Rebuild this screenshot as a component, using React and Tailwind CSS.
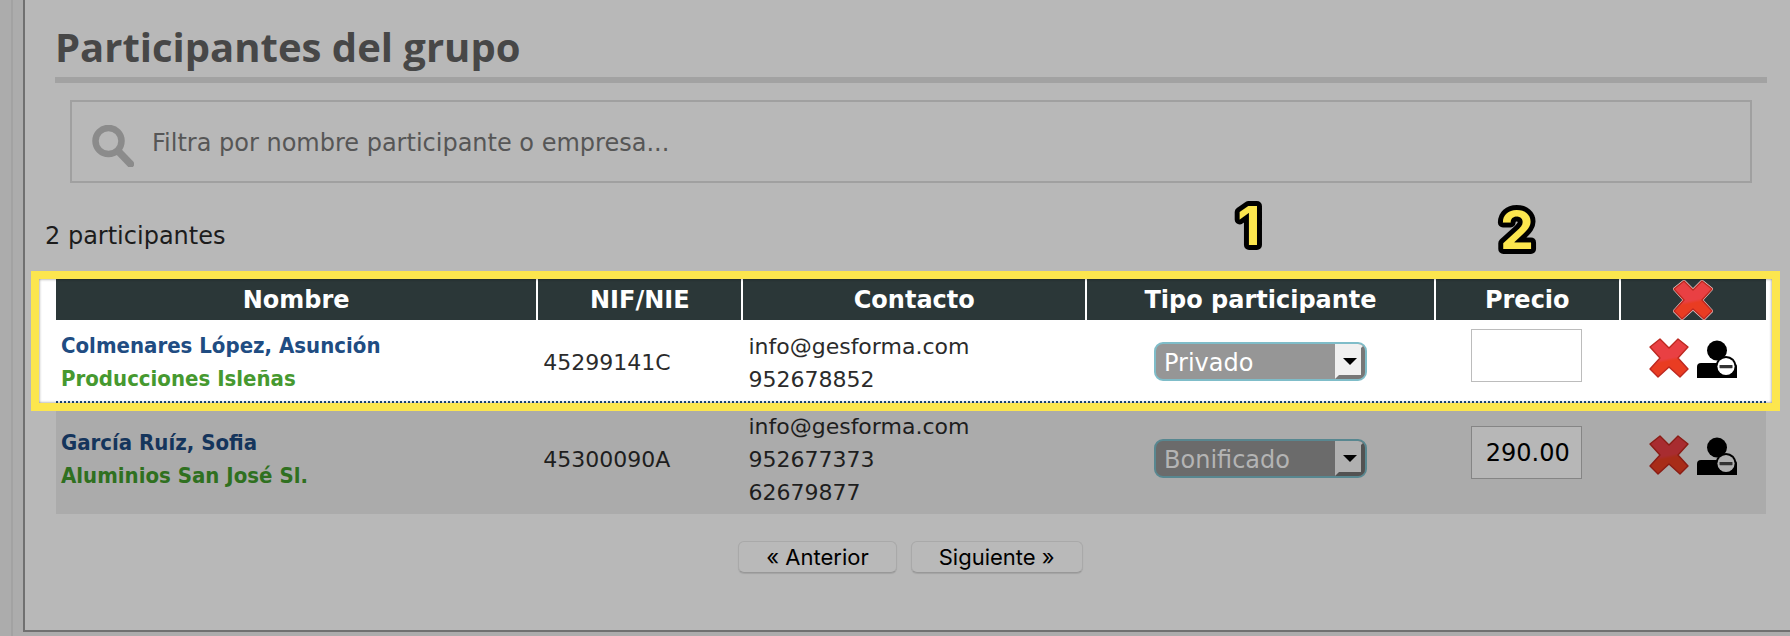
import React from "react";

const participants = [
  {
    name: "Colmenares López, Asunción",
    company: "Producciones Isleñas",
    nif: "45299141C",
    contact: ["info@gesforma.com", "952678852"],
    type: "Privado",
    price: "",
    active: true,
  },
  {
    name: "García Ruíz, Sofia",
    company: "Aluminios San José Sl.",
    nif: "45300090A",
    contact: ["info@gesforma.com", "952677373", "62679877"],
    type: "Bonificado",
    price: "290.00",
    active: false,
  },
];

function SearchIcon() {
  return (
    <svg viewBox="0 0 42 42" className="size-[42px] shrink-0" fill="none" stroke="#8b8b8b" aria-hidden="true">
      <circle cx="16.5" cy="16" r="13" strokeWidth="6.5" />
      <path d="M27 27 L38.5 39" strokeWidth="7.5" strokeLinecap="round" />
    </svg>
  );
}

function CrossIcon({ id, dim, outlined }) {
  return (
    <svg viewBox="0 0 40 40" className="size-10" aria-hidden="true">
      <defs>
        <linearGradient id={id} x1="0.4" y1="0" x2="0.6" y2="1">
          <stop offset="0.5" stopColor={dim ? "#a82c30" : "#e94043"} />
          <stop offset="0.58" stopColor={dim ? "#a82c18" : "#e93c22"} />
        </linearGradient>
      </defs>
      {outlined && (
        <path
          d="M11 1 L20 10 L29 1 L39 9 L29 20 L39 31 L31 39 L20 29 L9 39 L1 31 L11 20 L1 9 Z"
          fill="none" stroke="#e8d8d8" strokeWidth="2.6" strokeLinejoin="round"
        />
      )}
      <path
        d="M11 1 L20 10 L29 1 L39 9 L29 20 L39 31 L31 39 L20 29 L9 39 L1 31 L11 20 L1 9 Z"
        fill={`url(#${id})`} stroke={dim ? "#8a1c14" : "#bd2820"} strokeWidth="1.4" strokeLinejoin="round"
      />
    </svg>
  );
}

function RemoveUserIcon({ dim }) {
  const light = dim ? "#b0b0b0" : "#ffffff";
  return (
    <svg viewBox="0 0 40 40" className="size-10" aria-hidden="true">
      <circle cx="20" cy="12.5" r="10" fill="#000" />
      <path d="M0 40 V29 Q0 25 4 25 H36 Q40 25 40 29 V40 Z" fill="#000" />
      <circle cx="29" cy="28.5" r="10.5" fill="#000" />
      <circle cx="29" cy="28.5" r="8.6" fill={light} />
      <rect x="22.5" y="27" width="13" height="3.2" rx="0.6" fill="#333" />
    </svg>
  );
}

function TypeSelect({ value, dim, label }) {
  return (
    <div
      className={`relative mx-auto h-[39px] w-[213px] overflow-hidden rounded-[9px] border-2 ${
        dim ? "border-[#588790] bg-[#6b6b6b] text-[#b4b4b4]" : "border-[#7fbdc9] bg-[#969696] text-white"
      }`}
    >
      <select
        aria-label={label}
        defaultValue={value}
        className="size-full appearance-none bg-transparent pl-2 pr-8 pt-[2px] text-2xl leading-8 outline-none"
      >
        <option>Privado</option>
        <option>Bonificado</option>
      </select>
      <svg viewBox="0 0 30 35" className="pointer-events-none absolute right-0 top-0 h-[35px] w-[30px]" aria-hidden="true">
        <path d="M0 35 V0 H30 V35 Z" fill={dim ? "#525252" : "#777777"} />
        <path d="M0 35 V0 H30 L26 4 V31 H4 Z" fill={dim ? "#b0b0b0" : "#f0f0f0"} />
        <path d="M8 14 H22 L15 21 Z" fill="#000" />
      </svg>
    </div>
  );
}

function Row({ person, index }) {
  const dim = !person.active;
  const link = "block font-['DejaVu_Sans_Condensed','DejaVu_Sans',sans-serif] font-bold";
  return (
    <tr className={dim ? "h-[111px] bg-[#ababab] text-[#1e1e1e]" : "h-[83px] bg-white text-[#2b2b2b]"}>
      <td className="px-[5px]">
        <a href="#participante" className={`${link} ${dim ? "text-[#15355c]" : "text-[#204c82]"}`}>{person.name}</a>
        <a href="#empresa" className={`${link} ${dim ? "text-[#2f7020]" : "text-[#46992f]"}`}>{person.company}</a>
      </td>
      <td className="px-[5px] pt-[2px]">{person.nif}</td>
      <td className="px-[5px] pt-[2px]">
        {person.contact.map((line) => (
          <div key={line}>{line}</div>
        ))}
      </td>
      <td className="pr-[2px]">
        <TypeSelect value={person.type} dim={dim} label={`Tipo participante de ${person.name}`} />
      </td>
      <td className="pr-1 pb-3">
        <input
          type="text"
          aria-label={`Precio de ${person.name}`}
          defaultValue={person.price}
          className={`mx-auto block h-[53px] w-[111px] border pl-[14px] text-2xl text-black outline-none ${
            dim ? "border-[#858585] bg-[#b7b7b7]" : "border-[#bcbcbc] bg-white"
          }`}
        />
      </td>
      <td className="pb-2">
        <div className="flex justify-center gap-2">
          <button type="button" aria-label={`Eliminar a ${person.name}`}>
            <CrossIcon id={`cross-${index}`} dim={dim} />
          </button>
          <button type="button" aria-label={`Dar de baja a ${person.name}`}>
            <RemoveUserIcon dim={dim} />
          </button>
        </div>
      </td>
    </tr>
  );
}

function StepNumber({ value, className }) {
  return (
    <svg viewBox="0 0 56 84" className={`pointer-events-none absolute h-[84px] w-14 ${className}`}>
      <text
        x="28"
        y="62"
        textAnchor="middle"
        className="fill-[#fce64e] stroke-black stroke-10 font-['Inter',sans-serif] text-[54px] font-bold [paint-order:stroke] [stroke-linejoin:round]"
      >
        {value}
      </text>
    </svg>
  );
}

const head = "border-r-2 border-white bg-[#2b3738] text-2xl leading-8 font-bold text-white last:border-r-0";
const pager =
  "h-8 rounded-md border border-[#a9a9a9] border-b-[#989898] bg-[#b9b9b9] px-[27px] font-['Inter',sans-serif] text-[22px] leading-7 text-black shadow-[0_1px_1px_#a4a4a4]";

export default function App() {
  return (
    <div className="flex min-h-screen bg-[#acacac] pb-1 pl-[11px] font-['DejaVu_Sans',Verdana,sans-serif]">
      <div className="-mb-1 w-3 shrink-0 border-l-2 border-[#a2a2a2]" />
      <main className="min-w-0 flex-1 border-b-2 border-l-2 border-[#707070] bg-[#b8b8b8] pb-14">
        <h1 className="ml-[30px] mr-[23px] border-b-6 border-[#a2a2a2] pt-[18px] pb-[2px] font-['Open_Sans',sans-serif] text-[40px] leading-[57px] font-bold text-[#474747]">
          Participantes del grupo
        </h1>

        <label className="ml-[45px] mr-[38px] mt-[17px] flex h-[83px] items-center border-2 border-[#a0a0a0] pl-5">
          <span className="pt-2"><SearchIcon /></span>
          <input
            type="search"
            aria-label="Filtra por nombre participante o empresa"
            placeholder="Filtra por nombre participante o empresa..."
            className="ml-[18px] h-full min-w-0 flex-1 bg-transparent pt-[2px] text-2xl outline-none placeholder:text-[#565656]"
          />
        </label>

        <p className="ml-5 mt-[37px] text-2xl leading-8 text-[#1c1c1c]">2 participantes</p>

        <div className="relative isolate ml-[31px] mr-6 mt-[27px]">
          <div className="absolute -left-[17px] -right-[6px] top-0 -z-10 h-[124px] bg-white" />
          <table className="w-full table-fixed border-separate border-spacing-0 text-[22px] leading-[33px]">
            <colgroup>
              <col className="w-[28.2%]" />
              <col className="w-[12%]" />
              <col className="w-[20.1%]" />
              <col className="w-[20.4%]" />
              <col className="w-[10.8%]" />
              <col className="w-[8.5%]" />
            </colgroup>
            <thead>
              <tr className="h-[41px]">
                <th className={head}>Nombre</th>
                <th className={head}>NIF/NIE</th>
                <th className={head}>Contacto</th>
                <th className={head}>Tipo participante</th>
                <th className={head}>Precio</th>
                <th className={head}>
                  <button type="button" aria-label="Eliminar todos" className="mx-auto block">
                    <CrossIcon id="cross-all" outlined />
                  </button>
                </th>
              </tr>
            </thead>
            <tbody>
              {participants.map((person, i) => (
                <Row key={person.nif} person={person} index={i} />
              ))}
            </tbody>
          </table>
          <div className="pointer-events-none absolute inset-x-0 top-[122px] h-[2px] bg-[repeating-linear-gradient(90deg,#204c82_0_2px,#fff_2px_4px)]" />
          <div className="pointer-events-none absolute -left-[25px] -right-[14px] -top-2 h-[140px] border-8 border-[#fce64e] shadow-[inset_0_0_3px_rgba(0,0,0,0.5)]" />
          <StepNumber value="1" className="left-[68.1%] -top-24" />
          <StepNumber value="2" className="left-[83.8%] -top-[92px]" />
        </div>

        <nav aria-label="Paginación" className="mt-[27px] flex justify-center gap-[14px] pl-[6px]">
          <button type="button" className={pager}>« Anterior</button>
          <button type="button" className={pager}>Siguiente »</button>
        </nav>
      </main>
    </div>
  );
}
